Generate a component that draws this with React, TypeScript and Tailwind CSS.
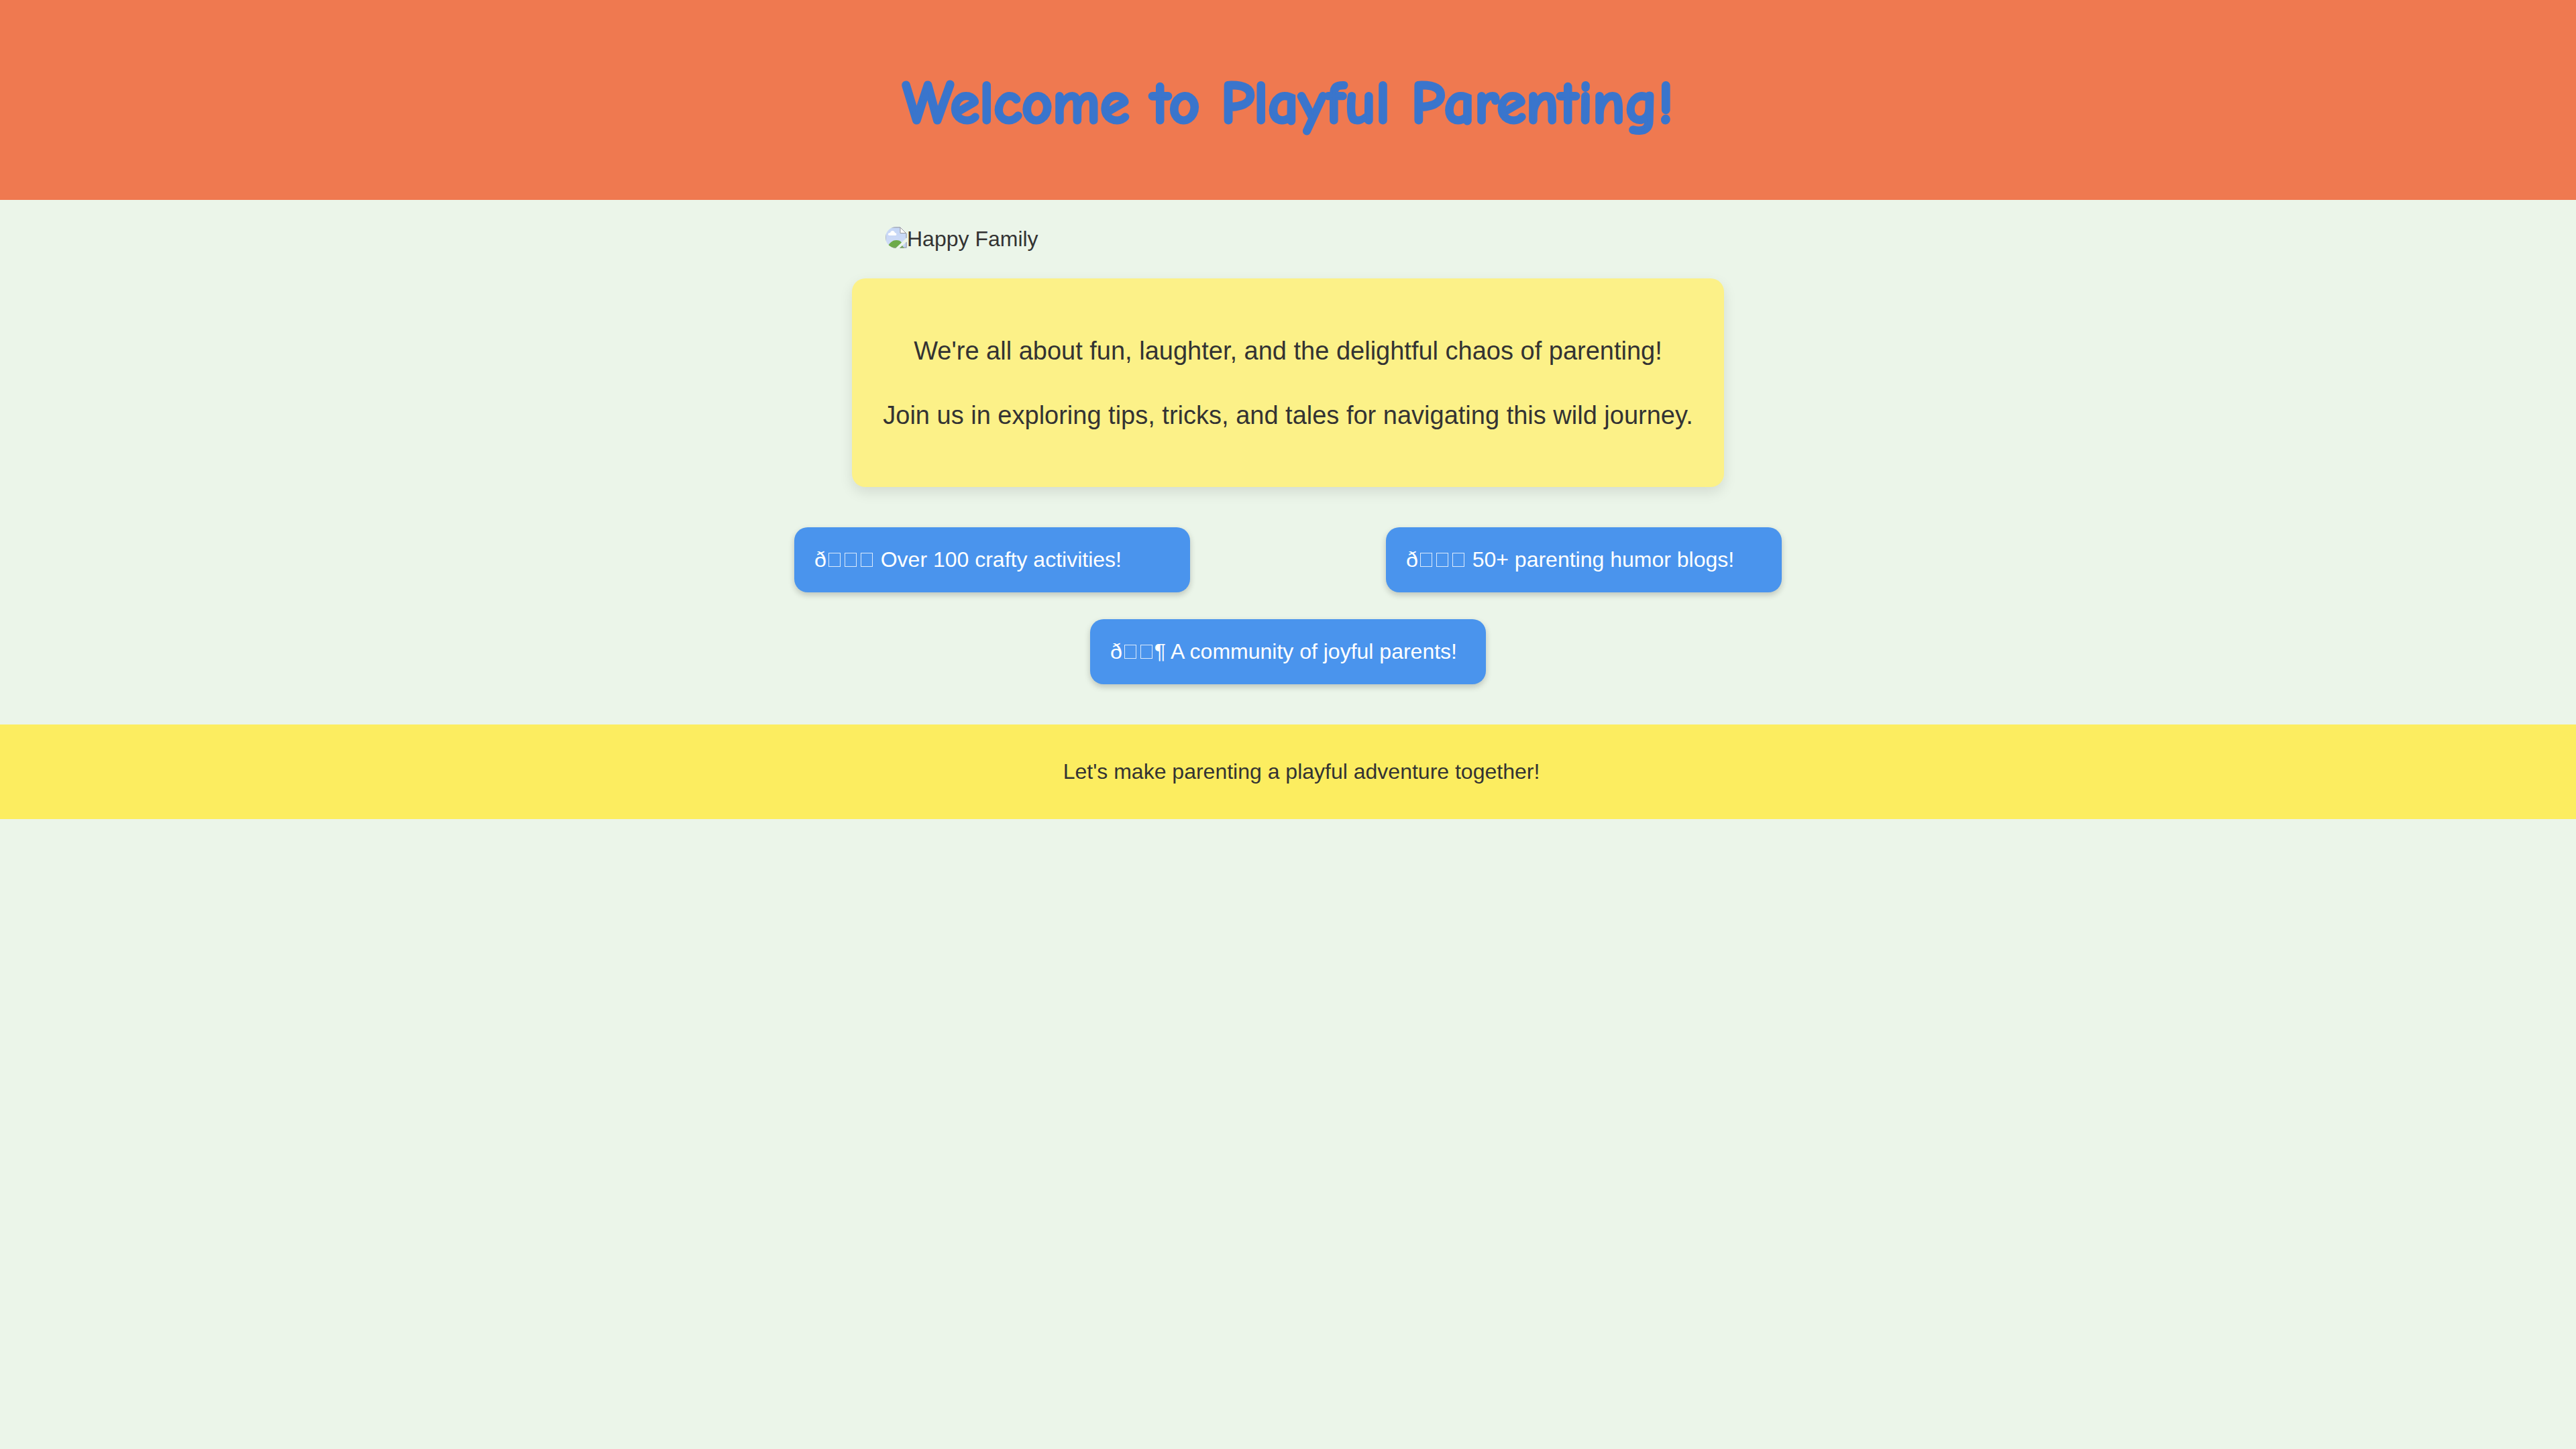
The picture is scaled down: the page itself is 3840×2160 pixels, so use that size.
type Feature = { boxes: number; tail: string; text: string };

const features: Feature[] = [
  { boxes: 3, tail: '', text: 'Over 100 crafty activities!' },
  { boxes: 3, tail: '', text: '50+ parenting humor blogs!' },
  { boxes: 2, tail: '¶', text: 'A community of joyful parents!' },
];

function PhotoIcon() {
  return (
    <svg viewBox="0 0 32 32" className="size-8 shrink-0 rounded-l-2xl" aria-hidden="true">
      <defs>
        <linearGradient id="sky" x1="0" y1="0" x2="0" y2="1">
          <stop offset="0" stopColor="#c4d6f6" />
          <stop offset="1" stopColor="#d0dcf6" />
        </linearGradient>
      </defs>
      <path d="M0 0H22L32 10V16L15 32H0Z" fill="url(#sky)" />
      <path d="M2 32C6 23 11 20 16 20C20 20 22 21 24 23.5L15 32Z" fill="#6dab4a" />
      <path d="M6 13C3 13 3 9 7 9C8 5 13 5 14 9C17 9 17 13 15 13Z" fill="#fff" />
      <path d="M32 22V32H21Z" fill="#c5d5f5" />
      <path d="M25 28L21 32H28Z" fill="#6dab4a" />
      <path d="M22 0V10H32Z" fill="#fff" />
      <path d="M0 31V1H22L31 10V17M22 1V9.5H31M31 23V31H22M16 31H1" fill="none" stroke="#999" strokeWidth="1" />
    </svg>
  );
}

function MissingGlyph() {
  return <span className="mx-[3px] inline-block h-[21px] w-[18px] border border-white/80" aria-hidden="true" />;
}

export default function App() {
  return (
    <div className="min-h-screen bg-[#ebf5e9] font-['Liberation_Sans',Arial,sans-serif] text-[32px] leading-[37px] text-[#333333]">
      <header className="bg-[#ef7950] px-10 pt-[85px] pb-[75px] text-center">
        <h1 className="font-['Comic_Sans_MS','Comic_Neue',cursive] text-[89px] leading-[138px] font-bold text-[#3a75cc] [-webkit-text-stroke:4px_#3a75cc]">
          Welcome to Playful Parenting!
        </h1>
      </header>
      <main className="flex flex-col items-center">
        <div role="img" aria-label="Happy Family" className="mt-10 flex w-full max-w-[1200px] items-start">
          <PhotoIcon />
          <span>Happy Family</span>
        </div>
        <section className="mt-10 flex flex-col gap-[38px] rounded-[20px] bg-[#fcf188] px-[46px] pt-[79px] pb-[78px] text-center text-[38px] leading-[58px] shadow-[0_8px_20px_rgba(0,0,0,0.1)]">
          <p>We're all about fun, laughter, and the delightful chaos of parenting!</p>
          <p>Join us in exploring tips, tricks, and tales for navigating this wild journey.</p>
        </section>
        <ul className="my-[60px] flex w-full max-w-[1764px] flex-wrap justify-around gap-y-10">
          {features.map((feature) => (
            <li
              key={feature.text}
              className="mx-5 w-[590px] rounded-[20px] bg-[#4a94ed] p-[30px] text-white shadow-[0_4px_10px_rgba(0,0,0,0.2)]"
            >
              ð
              {Array.from({ length: feature.boxes }, (_, i) => (
                <MissingGlyph key={i} />
              ))}
              {feature.tail} {feature.text}
            </li>
          ))}
        </ul>
      </main>
      <footer className="bg-[#fced60] py-[52px] pl-10 text-center">
        <p>Let's make parenting a playful adventure together!</p>
      </footer>
    </div>
  );
}
